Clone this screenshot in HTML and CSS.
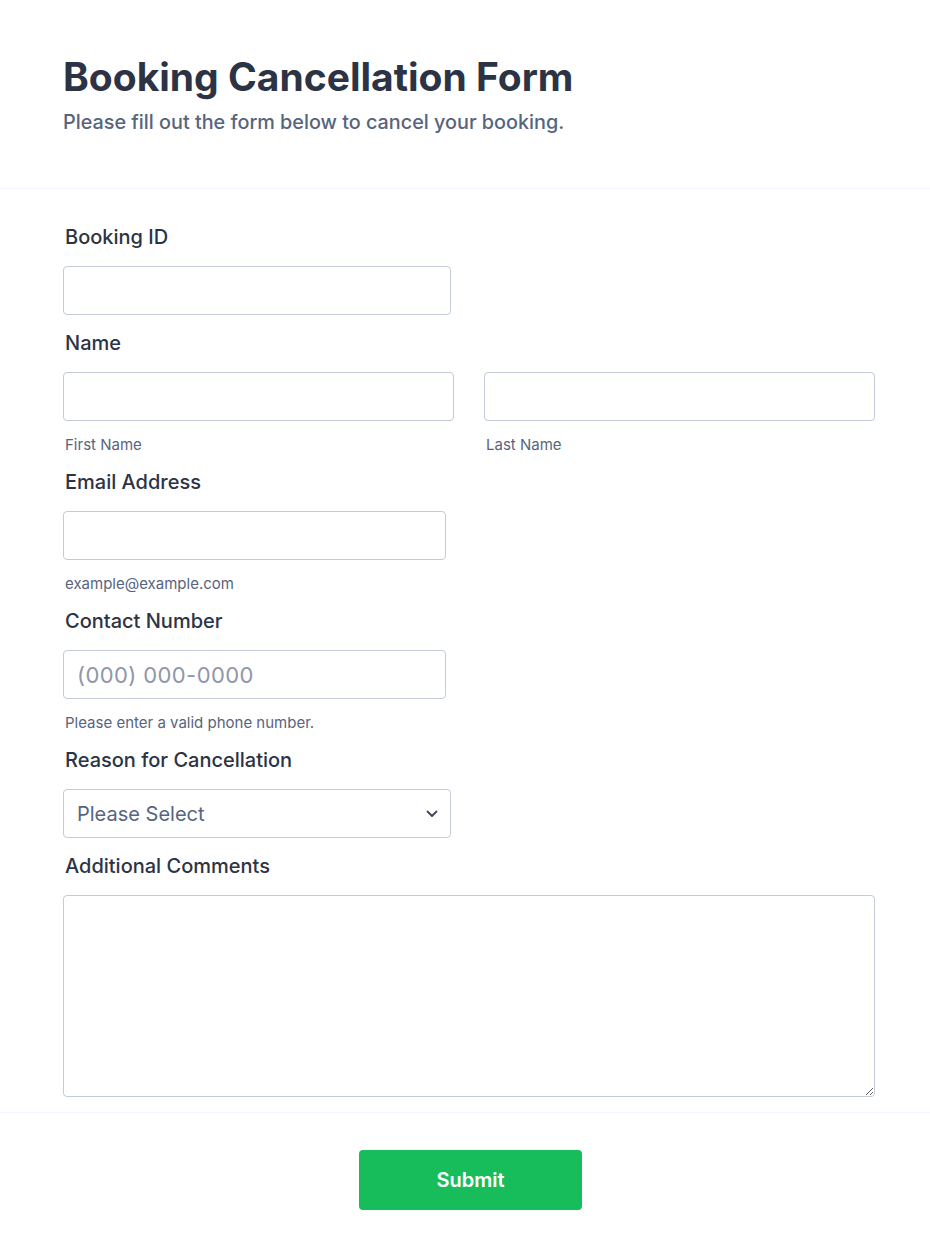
FILE: index.html
```
<html>
	<head>
		<meta name="viewport" content="width=device-width, initial-scale=1.0">
		<link rel="stylesheet" href="styles.css">
	</head>

	<body>
		<div id='page'>
			<div class='form-header'>
				<h1 class='form-title'>Booking Cancellation Form</h1>
				<p class='form-subtitle'>Please fill out the form below to cancel your booking.</p>
			</div>

			<form class='form-body'>
				<div class='field'>
					<label class='field-label' for='booking-id'>Booking ID</label>
					<input class='text-input w-388' id='booking-id' type='text'>
				</div>

				<div class='field'>
					<label class='field-label'>Name</label>
					<div class='name-row'>
						<div class='name-col'>
							<input class='text-input' type='text'>
							<span class='sublabel'>First Name</span>
						</div>
						<div class='name-col'>
							<input class='text-input' type='text'>
							<span class='sublabel'>Last Name</span>
						</div>
					</div>
				</div>

				<div class='field'>
					<label class='field-label' for='email'>Email Address</label>
					<input class='text-input w-383' id='email' type='email'>
					<span class='sublabel'>example@example.com</span>
				</div>

				<div class='field'>
					<label class='field-label' for='phone'>Contact Number</label>
					<input class='text-input phone-input w-383' id='phone' type='tel' placeholder='(000) 000-0000'>
					<span class='sublabel'>Please enter a valid phone number.</span>
				</div>

				<div class='field'>
					<label class='field-label' for='reason'>Reason for Cancellation</label>
					<div class='select-wrap w-388'>
						<select class='select-input' id='reason'>
							<option>Please Select</option>
							<option>Change of plans</option>
							<option>Found a better deal</option>
							<option>Other</option>
						</select>
						<svg class='chevron' width='12' height='8' viewBox='0 0 12 8'>
							<path d='M1.5 1.5 L6 6 L10.5 1.5' fill='none' stroke='#3e4759' stroke-width='1.8' stroke-linecap='round' stroke-linejoin='round'/>
						</svg>
					</div>
				</div>

				<div class='field'>
					<label class='field-label' for='comments'>Additional Comments</label>
					<textarea class='textarea-input' id='comments'></textarea>
				</div>
			</form>

			<div class='form-footer'>
				<button class='submit-btn' type='button'>Submit</button>
			</div>
		</div>
	</body>
</html>
```

FILE: styles.css
```
html, body {
	background: #fff;
}

body {
	margin: 0;
	font-family: Inter, 'Noto Sans', sans-serif;
	color: #2c3345;
}

.form-header {
	padding: 53px 63px 52px;
	border-bottom: 1px solid #f3f3fe;
}

.form-title {
	margin: 0;
	font-size: 39px;
	line-height: 48px;
	font-weight: 700;
	color: #2c3345;
}

.form-subtitle {
	margin: 8px 0 0;
	font-size: 19.8px;
	line-height: 27px;
	font-weight: 500;
	color: #57647e;
}

.form-body {
	display: flex;
	flex-direction: column;
	gap: 14px;
	margin: 0;
	padding: 34px 55px 15px 63px;
}

.field {
	display: flex;
	flex-direction: column;
	align-items: flex-start;
}

.field-label {
	font-size: 20px;
	line-height: 28px;
	font-weight: 500;
	margin: 0 0 15px 2px;
	color: #2c3345;
}

.text-input, .select-input, .textarea-input {
	box-sizing: border-box;
	height: 49px;
	border: 1px solid #c3cad8;
	border-radius: 4px;
	background: #fff;
	font-family: inherit;
	font-size: 20px;
	color: #2c3345;
	padding: 0 13px;
	margin: 0;
	outline: none;
}
.text-input::placeholder {
	color: #8f96a8;
}
.phone-input {
	font-size: 22px;
}
.phone-input::placeholder {
	letter-spacing: 0.4px;
}

.w-388 { width: 388px; }
.w-383 { width: 383px; }

.name-row {
	display: flex;
	gap: 30px;
	width: 100%;
}
.name-col {
	flex: 1;
	display: flex;
	flex-direction: column;
}
.name-col .text-input {
	width: 100%;
}

.sublabel {
	margin: 15px 0 0 2px;
	font-size: 15px;
	line-height: 18px;
	color: #57647e;
}

.select-wrap {
	position: relative;
}
.select-input {
	width: 100%;
	appearance: none;
	-webkit-appearance: none;
	color: #57647e;
}
.chevron {
	position: absolute;
	right: 13px;
	top: 21px;
	pointer-events: none;
}

.textarea-input {
	width: 100%;
	height: 202px;
	padding: 12px 13px;
	resize: both;
}

.form-footer {
	border-top: 1px solid #f3f3fe;
	padding: 37px 0 40px 11px;
	display: flex;
	justify-content: center;
}

.submit-btn {
	width: 223px;
	height: 60px;
	border: none;
	border-radius: 4px;
	background: #18bd5b;
	color: #fff;
	font-family: inherit;
	font-size: 20px;
	font-weight: 600;
	cursor: pointer;
}
```
